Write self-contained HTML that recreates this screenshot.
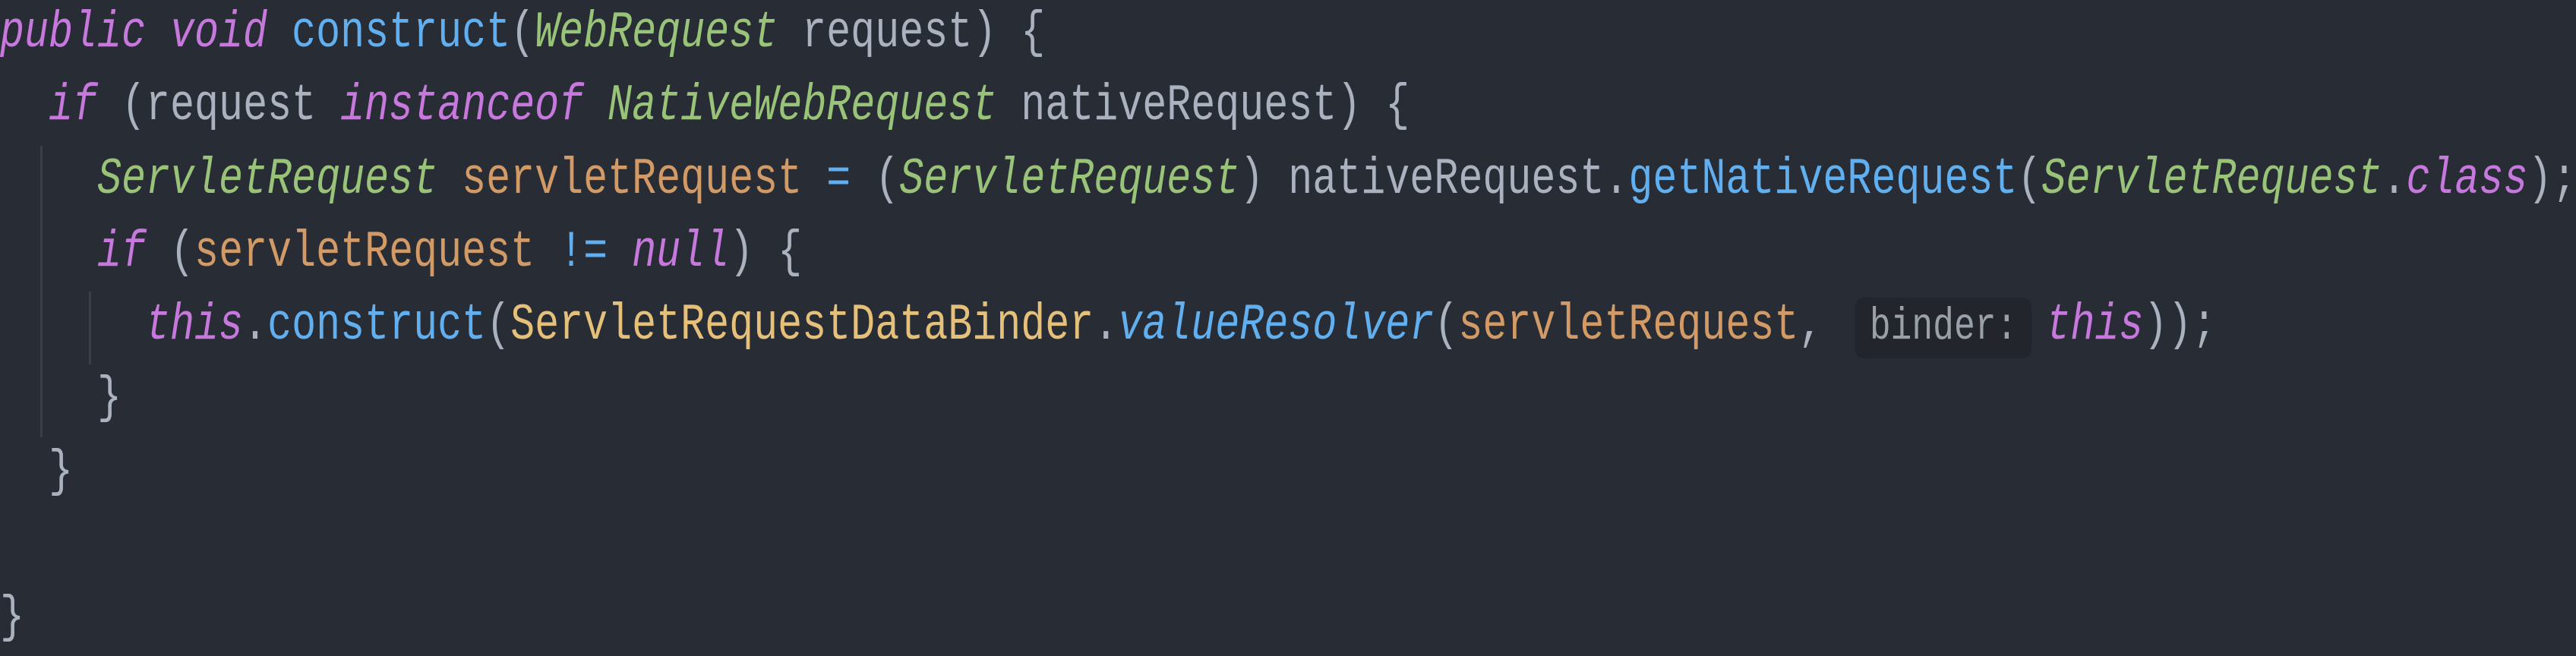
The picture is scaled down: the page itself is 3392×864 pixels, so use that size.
<!DOCTYPE html>
<html><head><meta charset="utf-8"><style>
html,body{margin:0;padding:0;background:#282c34;width:3392px;height:864px;overflow:hidden}
#code{position:absolute;left:0;top:-4px;transform:scaleX(0.7843);transform-origin:0 0;
font-family:"Liberation Mono",monospace;font-size:68px;line-height:96.25px;color:#abb2bf;white-space:pre}
.k{color:#c678dd;font-style:italic}
.f{color:#61afef}
.fi{color:#61afef;font-style:italic}
.t{color:#98c379;font-style:italic}
.v{color:#d19a66}
.c{color:#e5c07b}
.h{display:inline-block;position:relative;top:11px;margin-left:13px;margin-right:24px;width:297px;height:80px;line-height:78px;vertical-align:top;
background:#22252c;border-radius:14px;color:#9aa0a8;font-size:59px;text-align:center;box-sizing:border-box}
.g{position:absolute;width:3px;background:#3a3e46}
</style></head><body>
<div class="g" style="left:53px;top:192px;height:384px"></div>
<div class="g" style="left:117px;top:384px;height:96px"></div>
<div id="code"><span class="k">public void</span> <span class="f">construct</span>(<span class="t">WebRequest</span> request) {
  <span class="k">if</span> (request <span class="k">instanceof</span> <span class="t">NativeWebRequest</span> nativeRequest) {
    <span class="t">ServletRequest</span> <span class="v">servletRequest</span> <span class="f">=</span> (<span class="t">ServletRequest</span>) nativeRequest.<span class="f">getNativeRequest</span>(<span class="t">ServletRequest</span>.<span class="k">class</span>);
    <span class="k">if</span> (<span class="v">servletRequest</span> <span class="f">!=</span> <span class="k">null</span>) {
      <span class="k">this</span>.<span class="f">construct</span>(<span class="c">ServletRequestDataBinder</span>.<span class="fi">valueResolver</span>(<span class="v">servletRequest</span>, <span class="h">binder:</span><span class="k">this</span>));
    }
  }

}</div>
</body></html>
